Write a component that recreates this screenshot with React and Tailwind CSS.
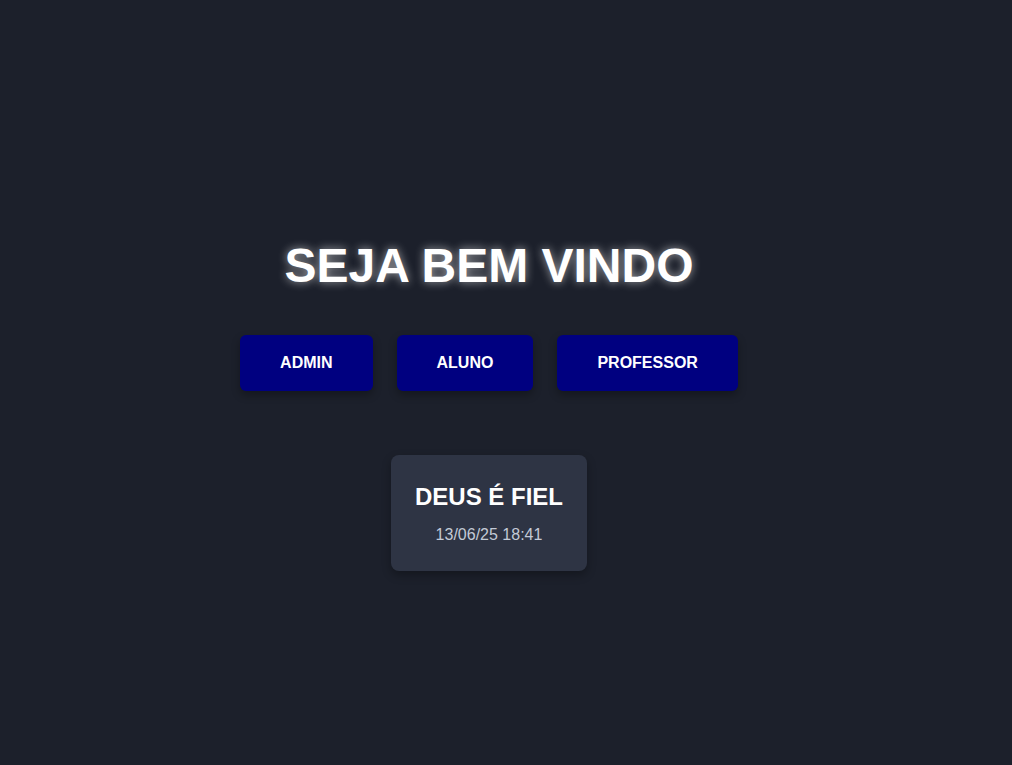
export default function App() {
  const roles = ["ADMIN", "ALUNO", "PROFESSOR"];

  return (
    <main className="min-h-screen bg-[#1c202b] pr-[34px] pt-[238px] font-['Liberation_Sans',Arial,sans-serif]">
      <div className="flex flex-col items-center">
        <h1 className="text-[48px] font-bold leading-[1.15] text-white [text-shadow:0_0_10px_rgba(255,255,255,0.6)]">
          SEJA BEM VINDO
        </h1>

        <div className="mt-[42px] flex gap-6">
          {roles.map((role) => (
            <button
              key={role}
              type="button"
              className="rounded-md bg-[#000080] px-10 py-[18.5px] text-base font-bold leading-[1.15] text-white shadow-[0_4px_8px_rgba(0,0,0,0.3)]"
            >
              {role}
            </button>
          ))}
        </div>

        <div className="mt-[64px] flex flex-col items-center gap-4 rounded-lg bg-[#2e3444] px-6 pb-[26px] pt-[28px] shadow-[0_4px_10px_rgba(0,0,0,0.3)]">
          <h2 className="text-2xl font-bold leading-[1.15] text-white">DEUS É FIEL</h2>
          <p className="text-base leading-[1.15] text-[#c3cad6]">13/06/25 18:41</p>
        </div>
      </div>
    </main>
  );
}
